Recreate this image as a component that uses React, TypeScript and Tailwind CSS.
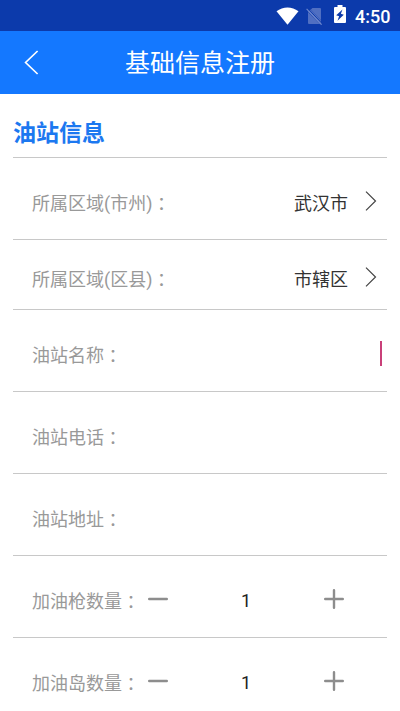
import type { ReactNode } from 'react';

function StatusBar() {
  return (
    <div className="flex h-[31px] items-center bg-[#0c3aab] pl-[276px] text-white">
      <svg width="23" height="18" viewBox="0 0 23 18" fill="currentColor">
        <path d="M.5 4.200C7-.9 16-.9 22.500 4.200L11.500 17.700Z" />
      </svg>
      <svg className="ml-[7px] mt-px" width="17" height="18" viewBox="0 0 17 18" fill="#506fc2">
        <path d="M6.500 1H14a1 1 0 0 1 1 1V13.200L4.800 2.600ZM2 5.100L13.600 17H3a1 1 0 0 1-1-1Z" />
        <path d="M2 4.500L4.800 2.600L15 13.200V17H13.600Z" />
        <path d="M1.200 .8L16.200 16.700" stroke="#0c3aab" strokeWidth="1" />
        <path d="M.6 1.800L15.600 17.700" stroke="#6b85cc" strokeWidth="1.200" />
      </svg>
      <svg className="-mt-[3px] ml-[11px]" width="12" height="18" viewBox="0 0 12 18">
        <path fill="currentColor" d="M3.500 0h5v2H11a1 1 0 0 1 1 1v14a1 1 0 0 1-1 1H1a1 1 0 0 1-1-1V3a1 1 0 0 1 1-1h2.500Z" />
        <path fill="#0c3aab" d="M8.500 4.500L2.200 10.300l2.900.9L3.500 15.800L9.800 9.700l-2.900-.9Z" />
      </svg>
      <span className="ml-[9px] mt-[3px] text-[18px] font-medium leading-none">4:50</span>
    </div>
  );
}

function Row({ label, short = false, children }: { label: string; short?: boolean; children?: ReactNode }) {
  return (
    <div className={`flex items-center border-b border-[#c8c8c8] pl-[19px] pt-2 ${short ? 'h-[70px]' : 'h-[82px]'}`}>
      <span className="flex whitespace-nowrap pt-[2px] text-[#999]">
        {label}
        <span className="-mt-px mb-px font-['Noto_Sans_CJK_JP',sans-serif]">：</span>
      </span>
      {children}
    </div>
  );
}

function Picked({ value }: { value: string }) {
  return (
    <>
      <span className="ml-auto pt-[2px] text-[#333]">{value}</span>
      <svg className="-mt-[3px] ml-[17px] mr-[10px]" width="12" height="20" viewBox="0 0 12 20" fill="none" stroke="#444" strokeWidth="1.200">
        <path d="M1 .6L10.500 10L1 19.400" />
      </svg>
    </>
  );
}

function Stepper() {
  return (
    <>
      <svg className="-mt-[3px] ml-[8px]" width="20" height="20" viewBox="0 0 20 20" stroke="#8d8d8d" strokeWidth="2.400" strokeLinecap="round">
        <path d="M1.200 10H18.800" />
      </svg>
      <span className="w-[156px] text-center text-[#222]">1</span>
      <svg className="-mt-[3px]" width="20" height="20" viewBox="0 0 20 20" stroke="#8d8d8d" strokeWidth="2.400" strokeLinecap="round">
        <path d="M1.200 10H18.800M10 1.200V18.800" />
      </svg>
    </>
  );
}

export default function App() {
  return (
    <div className="h-[711px] overflow-hidden bg-white font-['Roboto','Noto_Sans_CJK_SC',sans-serif] text-[18px] leading-[26px]">
      <StatusBar />
      <header className="grid h-[63px] grid-cols-[62px_1fr_62px] items-center bg-[#1478ff] text-white">
        <svg className="ml-6" width="15" height="25" viewBox="0 0 15 25" fill="none" stroke="currentColor" strokeWidth="1.700">
          <path d="M13.600 1L1.600 12.500L13.600 24" />
        </svg>
        <h1 className="pt-[3px] text-center text-[25px] leading-9">基础信息注册</h1>
      </header>
      <main className="px-[13px]">
        <h2 className="flex h-16 items-center border-b border-[#c8c8c8] pt-[17px] text-[23px] font-bold text-[#1c78f0]">油站信息</h2>
        <Row label="所属区域(市州)"><Picked value="武汉市" /></Row>
        <Row label="所属区域(区县)" short><Picked value="市辖区" /></Row>
        <Row label="油站名称">
          <span className="-mt-[3px] ml-auto mr-[5px] h-[25px] w-[2px] bg-[#c94079]" />
        </Row>
        <Row label="油站电话" />
        <Row label="油站地址" />
        <Row label="加油枪数量"><Stepper /></Row>
        <Row label="加油岛数量"><Stepper /></Row>
      </main>
    </div>
  );
}
